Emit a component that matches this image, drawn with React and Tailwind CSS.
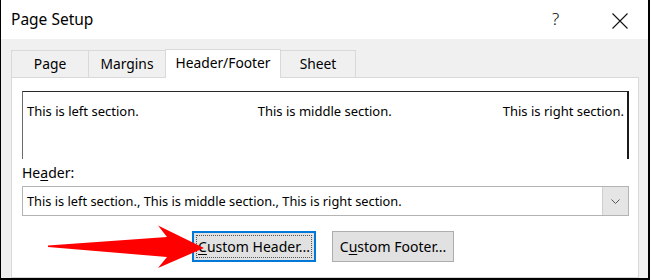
export default function App() {
  const font = { fontFamily: '"Noto Sans", "Open Sans", sans-serif' };
  return (
    <div
      className="relative w-[650px] h-[280px] overflow-hidden flex flex-col border-l border-r-2 border-b-2 border-black bg-white text-black"
      style={font}
    >
      {/* title bar */}
      <div className="h-[39px] shrink-0 bg-white flex items-center relative">
        <span className="pl-[10px] text-[15.5px] leading-none">Page Setup</span>
        <span className="absolute left-[551px] top-[10px] text-[17px] leading-none font-light">?</span>
        <svg className="absolute left-[611px] top-[13px]" width="16" height="16" viewBox="0 0 16 16">
          <path d="M0.5 0.5 L15.5 15.5 M15.5 0.5 L0.5 15.5" stroke="#111" strokeWidth="1.1" fill="none" />
        </svg>
      </div>

      {/* body */}
      <div className="flex-1 bg-[#f0f0f0] pt-[10px] pl-[10px] pr-[9px] flex flex-col">
        {/* tabs */}
        <div className="h-[28px] flex items-end text-[13.8px] leading-none shrink-0">
          <div className="w-[77px] h-[27px] border-t border-l border-[#d9d9d9] flex items-center justify-center">Page</div>
          <div className="w-[77px] h-[27px] border-t border-l border-[#d9d9d9] flex items-center justify-center">Margins</div>
          <div className="w-[116px] h-[29px] -mb-px relative z-10 bg-white border-t border-l border-r border-[#d9d9d9] flex items-center justify-center pb-[2px]">Header/Footer</div>
          <div className="w-[75px] h-[27px] border-t border-r border-[#d9d9d9] flex items-center justify-center">Sheet</div>
        </div>

        {/* panel */}
        <div className="flex-1 bg-white border border-[#d9d9d9] pt-[13px] pl-[10px] pr-[9px] flex flex-col text-[13px]">
          {/* preview */}
          <div className="h-[68px] shrink-0 border-t border-t-[#2a2a2a] border-l border-l-[#6b6b6b] border-r-2 border-r-[#1a1a1a] flex justify-between items-start pt-[9px] pl-[4px] pr-[3px] leading-[20px]">
            <span>This is left section.</span>
            <span className="mr-[-8px]">This is middle section.</span>
            <span>This is right section.</span>
          </div>

          <div className="mt-[4px] leading-[20px] text-[14px]">
            He<span className="underline underline-offset-2">a</span>der:
          </div>

          {/* dropdown */}
          <div className="mt-[3px] h-[30px] shrink-0 border border-[#b4b4b4] flex items-stretch">
            <div className="flex-1 flex items-center pl-[4px] leading-none text-[12.8px]">
              This is left section., This is middle section., This is right section.
            </div>
            <div className="w-[26px] bg-[#e5e5e5] border-l border-[#cfcfcf] flex items-center justify-center">
              <svg width="9" height="5" viewBox="0 0 9 5">
                <path d="M0.5 0.5 L4.5 4.5 L8.5 0.5" stroke="#555" strokeWidth="1" fill="none" />
              </svg>
            </div>
          </div>

          {/* buttons */}
          <div className="mt-[15px] flex gap-[16px] pl-[170px] text-[14px] relative">
            <div className="w-[124px] h-[31px] border-2 border-[#0078d7] bg-[#e1e1e1] p-[2px] flex">
              <div className="flex-1 border border-dotted border-[#555] flex items-center justify-center leading-none">
                <span><span className="underline underline-offset-2">C</span>ustom Header...</span>
              </div>
            </div>
            <div className="w-[122px] h-[31px] border border-[#adadad] bg-[#e1e1e1] flex items-center justify-center leading-none">
              <span>C<span className="underline underline-offset-2">u</span>stom Footer...</span>
            </div>
          </div>
        </div>
      </div>

      {/* red arrow overlay */}
      <svg className="absolute left-0 top-0 pointer-events-none" width="650" height="280" viewBox="0 0 650 280">
        <polygon
          points="47,245.5 166,237 157,225.5 203,248 157,268 166,257 47,247"
          fill="#ff0000"
        />
      </svg>
    </div>
  );
}
